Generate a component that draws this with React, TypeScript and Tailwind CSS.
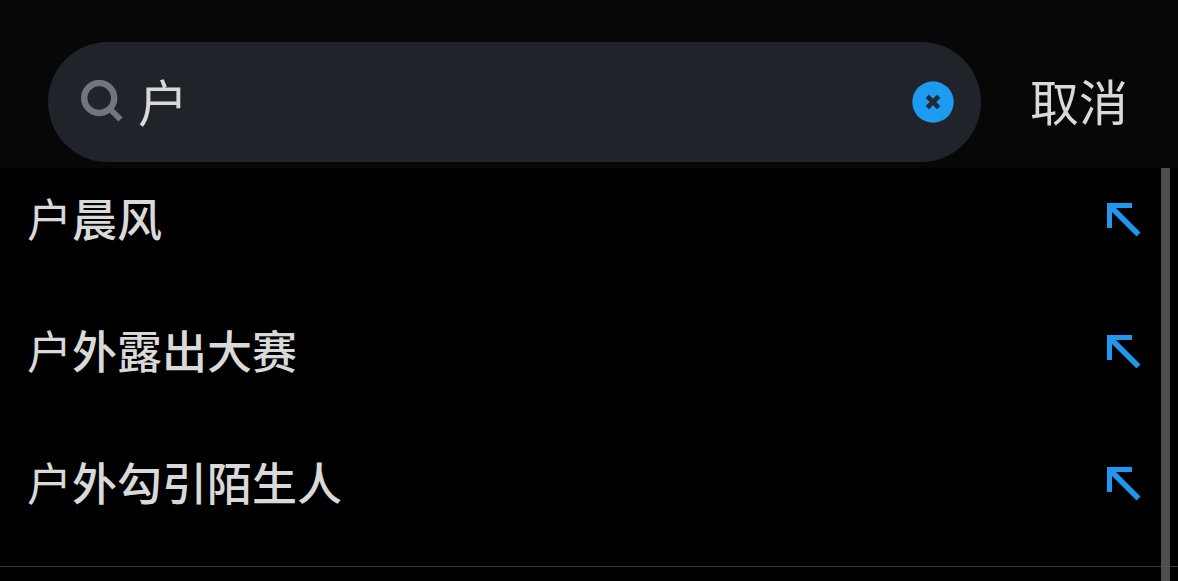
import { useState } from "react";

const suggestions = [
  { match: "户", rest: "晨风" },
  { match: "户", rest: "外露出大赛" },
  { match: "户", rest: "外勾引陌生人" },
];

function SearchIcon() {
  return (
    <svg className="size-11 shrink-0" viewBox="0 0 44 44" fill="none" stroke="#71767b" aria-hidden="true">
      <circle cx="19.2" cy="18" r="15" strokeWidth="6.4" />
      <path d="M29 28 L40.5 39.5" strokeWidth="6" />
    </svg>
  );
}

function ClearIcon() {
  return (
    <svg className="size-[42px]" viewBox="0 0 42 42" aria-hidden="true">
      <circle cx="21" cy="21" r="20.7" fill="#1d9bf0" />
      <path d="M15.3 15.3 L26.7 26.7 M26.7 15.3 L15.3 26.7" stroke="#202a33" strokeWidth="4.6" />
    </svg>
  );
}

function FillArrow() {
  return (
    <svg className="size-9" viewBox="0 0 36 36" fill="none" stroke="#2196ee" strokeWidth="5" aria-hidden="true">
      <path d="M4.5 28 V5.5 H27" />
      <path d="M4.5 5.5 L33.5 34.5" strokeWidth="5.6" />
    </svg>
  );
}

export default function App() {
  const [query, setQuery] = useState("户");

  return (
    <div className="flex min-h-screen flex-col overflow-hidden bg-black font-['Noto_Sans_CJK_SC',sans-serif] text-[#d9d9d9]">
      <header className="flex items-center bg-[#070707] pt-[42px] pr-[50px] pb-[6px] pl-12">
        <div className="flex h-[120px] min-w-0 flex-1 items-center rounded-full bg-[#20242a] pr-[27px] pl-8">
          <SearchIcon />
          <input
            type="text"
            aria-label="搜索"
            value={query}
            onChange={(event) => setQuery(event.target.value)}
            className="ml-[14px] h-20 min-w-0 flex-1 bg-transparent pb-[5px] text-[50px] leading-[75px] outline-none"
          />
          <button type="button" aria-label="清除" onClick={() => setQuery("")} className="shrink-0">
            <ClearIcon />
          </button>
        </div>
        <button type="button" className="ml-[49px] shrink-0 pb-[5px] text-[49px] leading-[75px]">
          取消
        </button>
      </header>

      <main className="relative flex-1 pt-[2px]">
        <ul className="border-b border-[#3a3a3a]">
          {suggestions.map((item) => (
            <li key={item.rest}>
              <button
                type="button"
                onClick={() => setQuery(item.match + item.rest)}
                className="flex w-full items-center justify-between pt-5 pr-[37px] pb-[56px] pl-[27px] text-left text-[45px] leading-[56px]"
              >
                <span>
                  <span className="font-normal">{item.match}</span>
                  <span className="font-medium">{item.rest}</span>
                </span>
                <FillArrow />
              </button>
            </li>
          ))}
        </ul>
        <div className="absolute inset-y-0 right-2 w-[9px] bg-[#575757]/90" />
      </main>
    </div>
  );
}
